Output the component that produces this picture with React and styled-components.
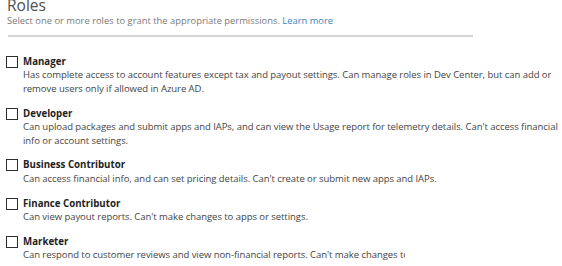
import styled, { createGlobalStyle } from "styled-components";

const GlobalStyle = createGlobalStyle`
  html, body {
    margin: 0;
    padding: 0;
    background: #ffffff;
  }
  body {
    font-family: "Open Sans", "Noto Sans", sans-serif;
    overflow: hidden;
  }
`;

const Page = styled.div`
  width: 562px;
  height: 266px;
  padding-left: 7px;
  box-sizing: border-box;
  overflow: hidden;
`;

const Header = styled.header`
  display: flex;
  flex-direction: column;
`;

const Title = styled.h2`
  margin: -3px 0 0;
  font-size: 15.5px;
  line-height: 17px;
  font-weight: 400;
  color: #505050;
`;

const Subtitle = styled.p`
  margin: 0;
  font-size: 9.4px;
  line-height: 14px;
  color: #7a7a7a;
`;

const LearnMore = styled.a`
  color: #3a86bd;
  text-decoration: none;
  cursor: pointer;
`;

const Divider = styled.hr`
  margin: 7px 0 0 1px;
  width: 465px;
  height: 2px;
  border: none;
  background: #d4d4d4;
`;

const RoleList = styled.ul`
  list-style: none;
  margin: 18px 0 0 -1px;
  padding: 0;
  display: flex;
  flex-direction: column;
  gap: 11.5px;
`;

const RoleRow = styled.li`
  display: flex;
  align-items: flex-start;
  gap: 5px;
`;

const Checkbox = styled.span`
  flex: none;
  width: 12px;
  height: 12px;
  margin-top: 1px;
  box-sizing: border-box;
  border: 1.5px solid #2e2e2e;
  background: #fff;
`;

const RoleText = styled.div`
  display: flex;
  flex-direction: column;
`;

const RoleName = styled.span`
  font-size: 9.7px;
  line-height: 13.4px;
  font-weight: 700;
  color: #1e1e1e;
`;

const DescLine = styled.span`
  display: block;
  font-size: 9.5px;
  line-height: 13.4px;
  letter-spacing: -0.05px;
  color: #444;
  white-space: nowrap;
  overflow: hidden;
  max-width: ${(p) => p.$clip || "540px"};
`;

const roles = [
  {
    name: "Manager",
    lines: [
      "Has complete access to account features except tax and payout settings. Can manage roles in Dev Center, but can add or",
      "remove users only if allowed in Azure AD.",
    ],
  },
  {
    name: "Developer",
    lines: [
      "Can upload packages and submit apps and IAPs, and can view the Usage report for telemetry details. Can't access financial",
      "info or account settings.",
    ],
  },
  {
    name: "Business Contributor",
    lines: [
      "Can access financial info, and can set pricing details. Can't create or submit new apps and IAPs.",
    ],
  },
  {
    name: "Finance Contributor",
    lines: ["Can view payout reports. Can't make changes to apps or settings."],
  },
  {
    name: "Marketer",
    lines: [
      "Can respond to customer reviews and view non-financial reports. Can't make changes to apps or settings.",
    ],
    clip: "382px",
  },
];

export default function App() {
  return (
    <Page>
      <GlobalStyle />
      <Header>
        <Title>Roles</Title>
        <Subtitle>
          Select one or more roles to grant the appropriate permissions.{" "}
          <LearnMore>Learn more</LearnMore>
        </Subtitle>
        <Divider />
      </Header>
      <RoleList>
        {roles.map((role) => (
          <RoleRow key={role.name}>
            <Checkbox />
            <RoleText>
              <RoleName>{role.name}</RoleName>
              {role.lines.map((line) => (
                <DescLine key={line} $clip={role.clip}>
                  {line}
                </DescLine>
              ))}
            </RoleText>
          </RoleRow>
        ))}
      </RoleList>
    </Page>
  );
}
